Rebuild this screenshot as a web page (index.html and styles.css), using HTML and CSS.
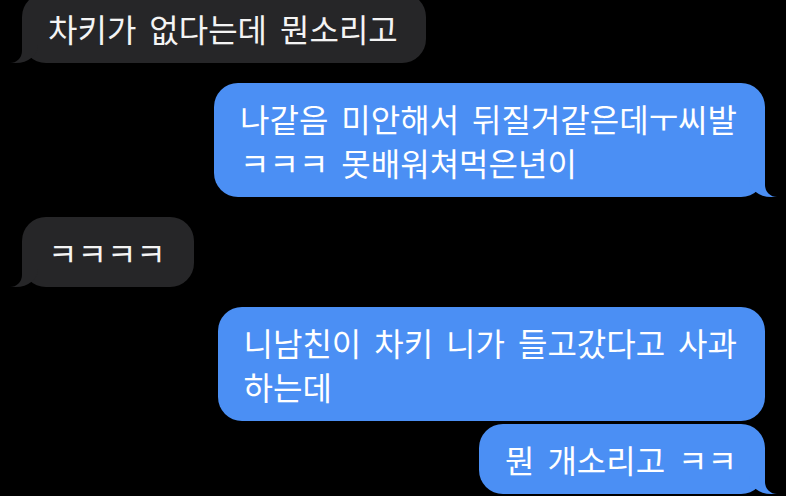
FILE: index.html
```html
<!DOCTYPE html>
<html lang="ko">
<head>
<meta charset="utf-8">
<title>Messages</title>
<link rel="stylesheet" href="styles.css">
</head>
<body>
<main class="chat">
  <div class="bubble them tail">차키가 없다는데 뭔소리고</div>
  <div class="bubble me tail">나같음 미안해서 뒤질거같은데ㅜ씨발<br>ㅋㅋㅋ 못배워쳐먹은년이</div>
  <div class="bubble them tail">ㅋㅋㅋㅋ</div>
  <div class="bubble me">니남친이 차키 니가 들고갔다고 사과<br>하는데</div>
  <div class="bubble me tail cont">뭔 개소리고 ㅋㅋ</div>
</main>
</body>
</html>
```

FILE: styles.css
```css
html, body {
  margin: 0;
  padding: 0;
  background: #000;
  height: 100%;
  overflow: hidden;
}

.chat {
  display: flex;
  flex-direction: column;
  margin-top: -7px;
  font-family: "Noto Sans CJK KR", "Noto Sans", sans-serif;
  font-size: 32px;
  line-height: 44px;
  color: #fff;
}

.bubble {
  position: relative;
  padding: 13px 28px 13px 26px;
  border-radius: 24px;
  margin-top: 20px;
  white-space: nowrap;
  word-spacing: 4px;
}

.bubble:first-child {
  margin-top: 0;
}

.bubble.cont {
  margin-top: 3px;
}

.them {
  align-self: flex-start;
  margin-left: 22px;
  background: #262628;
  color: #f4f4f4;
}

.me {
  align-self: flex-end;
  margin-right: 21px;
  background: #4b8ff4;
}

.tail::before,
.tail::after {
  content: "";
  position: absolute;
  bottom: 0;
  height: 28px;
}

.me.tail::before {
  right: -12px;
  width: 28px;
  background: #4b8ff4;
  border-bottom-left-radius: 22px 18px;
}

.me.tail::after {
  right: -24px;
  width: 24px;
  background: #000;
  border-bottom-left-radius: 12px;
}

.them.tail::before {
  left: -12px;
  width: 28px;
  background: #262628;
  border-bottom-right-radius: 22px 18px;
}

.them.tail::after {
  left: -24px;
  width: 24px;
  background: #000;
  border-bottom-right-radius: 12px;
}
```
